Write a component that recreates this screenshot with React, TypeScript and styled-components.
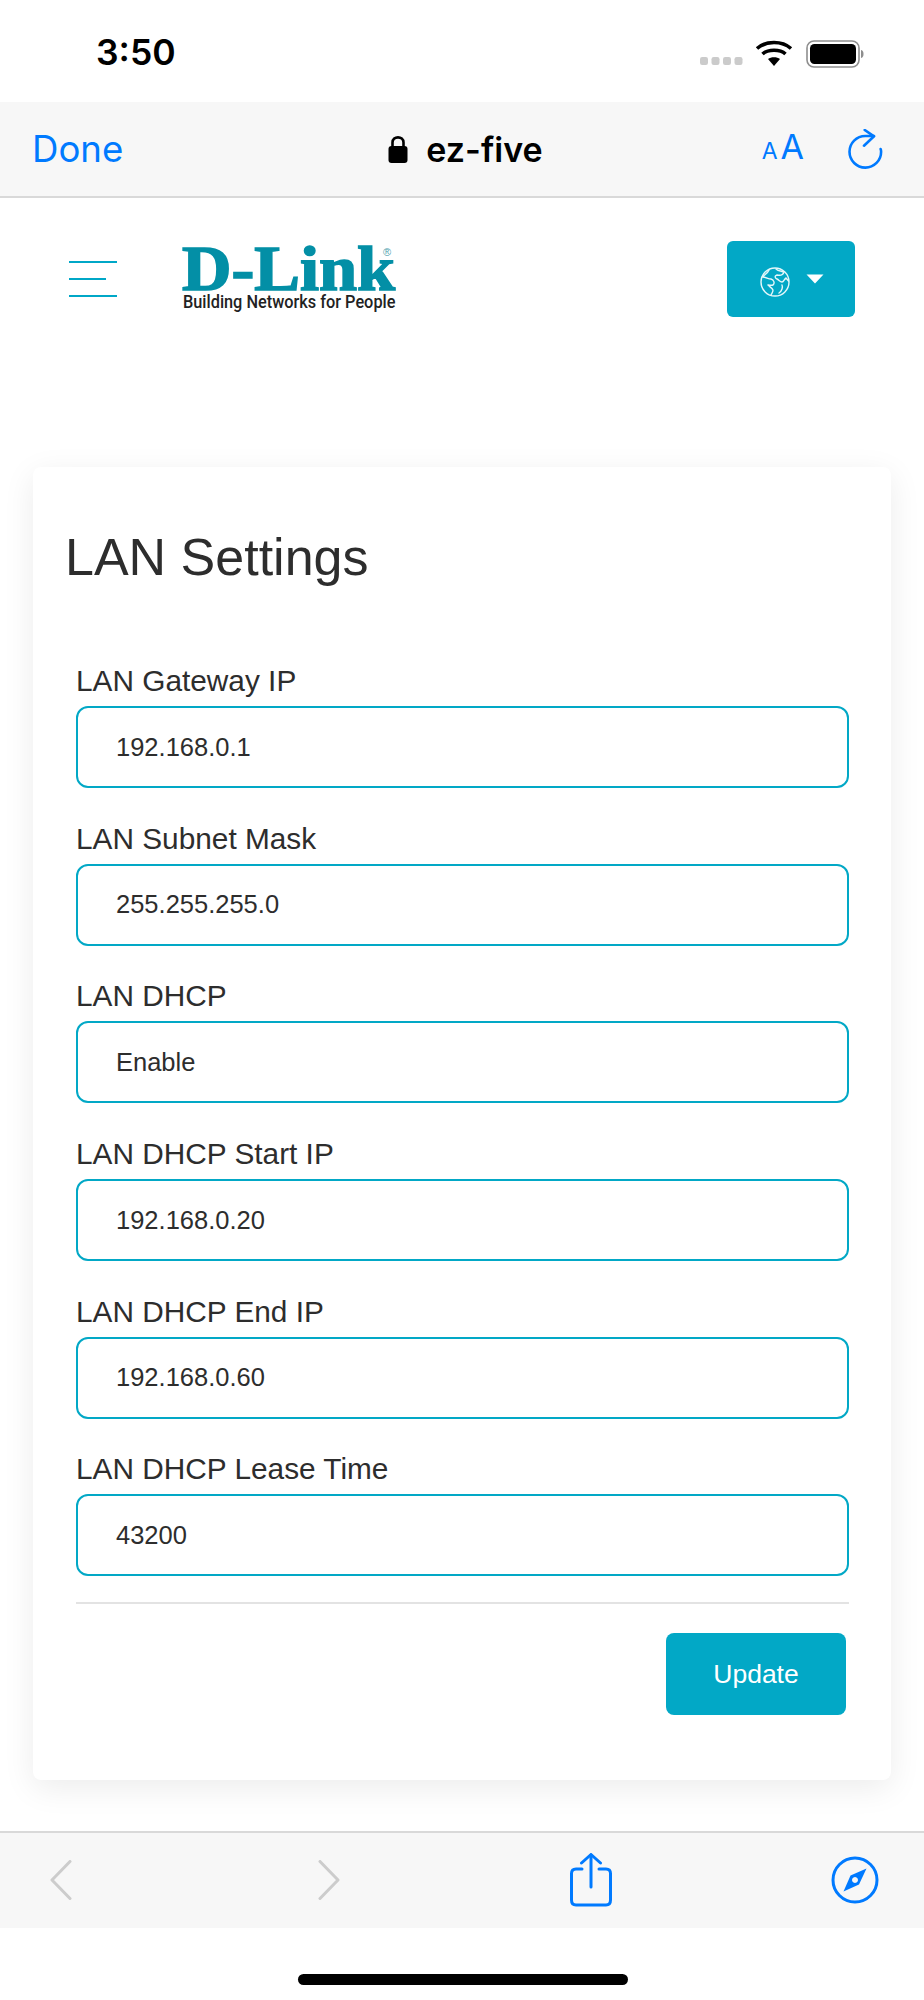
import React from 'react';
import styled, { createGlobalStyle } from 'styled-components';

const Global = createGlobalStyle`
  html, body { margin: 0; padding: 0; background: #fff; }
  * { box-sizing: border-box; }
`;

const Page = styled.div`
  width: 924px;
  height: 2000px;
  display: flex;
  flex-direction: column;
  overflow: hidden;
  background: #fff;
  font-family: "Liberation Sans", Arial, sans-serif;
`;

const StatusBar = styled.div`
  height: 102px;
  flex: none;
  display: flex;
  justify-content: space-between;
  padding: 32px 0 0 96px;
`;

const Clock = styled.span`
  font-family: Inter, sans-serif;
  font-weight: 600;
  font-size: 35.5px;
  line-height: 42px;
  color: #000;
`;

const StatusIcons = styled.div`
  display: flex;
  align-items: flex-start;
  padding: 6px 0 0 0;
  margin-right: 52px;
`;

const SafariTop = styled.div`
  height: 96px;
  flex: none;
  background: #f7f7f7;
  border-bottom: 2px solid #d9d9d9;
  display: grid;
  grid-template-columns: 1fr auto 1fr;
  align-items: center;
  padding: 0 32px;
`;

const DoneLink = styled.span`
  font-family: Inter, sans-serif;
  font-size: 36.6px;
  color: #007aff;
`;

const Address = styled.div`
  display: flex;
  align-items: center;
  gap: 18px;
  margin-left: 7px;
  font-family: Inter, sans-serif;
  font-weight: 600;
  font-size: 34px;
  color: #000;
`;

const TopActions = styled.div`
  display: flex;
  justify-content: flex-end;
  align-items: center;
  gap: 44px;
  margin-right: 8px;
`;

const TextSize = styled.div`
  display: flex;
  align-items: baseline;
  gap: 3px;
  font-family: Inter, sans-serif;
  color: #007aff;
  line-height: 30px;
`;

const TextSizeLetter = styled.span<{ $size: number }>`
  font-size: ${p => p.$size}px;
`;

const SiteHeader = styled.header`
  flex: none;
  height: 269px;
  display: flex;
  align-items: flex-start;
  padding: 43px 69px 0 69px;
`;

const Burger = styled.div`
  width: 48px;
  display: flex;
  flex-direction: column;
  gap: 15px;
  margin-top: 20px;
`;

const BurgerLine = styled.span<{ $w: number }>`
  display: block;
  height: 2px;
  width: ${p => p.$w}px;
  background: #00a7c7;
`;

const LogoSlot = styled.div`
  margin-left: 65px;
  margin-top: -14px;
`;

const LangButton = styled.div`
  margin-left: auto;
  width: 128px;
  height: 76px;
  background: #02a8c6;
  border-radius: 6px;
  display: flex;
  align-items: center;
  justify-content: center;
  gap: 16px;
  padding-left: 2px;
`;

const Card = styled.section`
  flex: none;
  margin: 0 33px;
  height: 1313px;
  background: #fff;
  border-radius: 8px;
  padding: 0 42px 0 32px;
  box-shadow: 0 8px 32px rgba(0, 0, 0, 0.08);
`;

const Title = styled.h1`
  margin: 0 0 68px 0;
  padding-top: 54px;
  font-size: 52px;
  line-height: 72px;
  font-weight: 400;
  color: #2d2d2d;
`;

const Fields = styled.div`
  display: flex;
  flex-direction: column;
  padding-left: 11px;
  gap: 30.7px;
`;

const Field = styled.div`
  display: flex;
  flex-direction: column;
`;

const Label = styled.label`
  font-size: 29.8px;
  line-height: 36px;
  height: 36px;
  margin-top: 2px;
  margin-bottom: 7px;
  color: #2d2d2d;
`;

const Value = styled.div`
  height: 82px;
  border: 2px solid #02a8c6;
  border-radius: 12px;
  padding: 0 38px;
  display: flex;
  align-items: center;
  font-size: 25.5px;
  color: #2d2d2d;
`;

const Divider = styled.hr`
  border: 0;
  height: 2px;
  margin: 26px 0 29px 11px;
  background: #e3e3e3;
`;

const Actions = styled.div`
  display: flex;
  justify-content: flex-end;
  padding-right: 3px;
`;

const UpdateButton = styled.button`
  width: 180px;
  height: 82px;
  border: 0;
  border-radius: 8px;
  background: #02a8c6;
  color: #fff;
  font-family: inherit;
  font-size: 26.5px;
`;

const SafariBottom = styled.div`
  margin-top: 51px;
  flex: none;
  height: 97px;
  background: #f7f7f7;
  border-top: 2px solid #d9d9d9;
  display: grid;
  grid-template-columns: repeat(4, 1fr);
  align-items: center;
  padding: 0 0 2px 0;
`;

const ToolSlot = styled.div<{ $left: number }>`
  padding-left: ${p => p.$left}px;
  display: flex;
`;

const HomeArea = styled.div`
  flex: 1;
  display: flex;
  justify-content: center;
  padding: 46px 0 0 2px;
`;

const HomeBar = styled.div`
  width: 330px;
  height: 11px;
  border-radius: 6px;
  background: #000;
`;

const fields = [
  ['LAN Gateway IP', '192.168.0.1'],
  ['LAN Subnet Mask', '255.255.255.0'],
  ['LAN DHCP', 'Enable'],
  ['LAN DHCP Start IP', '192.168.0.20'],
  ['LAN DHCP End IP', '192.168.0.60'],
  ['LAN DHCP Lease Time', '43200'],
];

const blue = '#007aff';

const SignalWifiBattery = () => (
  <svg width="172" height="30" viewBox="0 0 172 30">
    <g fill="#cbcbcb">
      <rect x="0" y="19" width="8" height="8" rx="2.2" />
      <rect x="11.5" y="19" width="8" height="8" rx="2.2" />
      <rect x="23" y="19" width="8" height="8" rx="2.2" />
      <rect x="34.5" y="19" width="8" height="8" rx="2.2" />
    </g>
    <g fill="none" stroke="#000" strokeWidth="3.6">
      <path d="M57 10.5 C66 2.5 82 2.5 91 10.5" />
      <path d="M62.5 16 C68 11 80 11 85.5 16" />
    </g>
    <path d="M68 21 C71 18.5 77 18.5 80 21 L74 28 Z" fill="#000" />
    <rect x="107" y="3" width="52" height="26" rx="7" fill="none" stroke="#8e8e8e" strokeWidth="1.6" />
    <rect x="110" y="6" width="46" height="20" rx="4.5" fill="#000" />
    <path d="M161 12 C163 12.5 163.5 14 163.5 16 C163.5 18 163 19.5 161 20 Z" fill="#8e8e8e" />
  </svg>
);

const LockIcon = () => (
  <svg width="20" height="28" viewBox="0 0 20 28">
    <path d="M4.5 12 V7.5 C4.5 0.6 15.5 0.6 15.5 7.5 V12" fill="none" stroke="#000" strokeWidth="2.6" />
    <rect x="0.5" y="11" width="19" height="17" rx="3" fill="#000" />
  </svg>
);

const ReloadIcon = () => (
  <svg width="36" height="40" viewBox="0 0 36 40" fill="none" stroke={blue} strokeWidth="2.6" strokeLinecap="round" strokeLinejoin="round">
    <path d="M26 7 H17.3 A15.8 15.8 0 1 0 33.1 22.7 C33.1 21.5 33 21 32.6 20" />
    <path d="M16.7 1 L26 7.3 L16 16.7" />
  </svg>
);

const GlobeSvg = styled.svg`
  margin-top: 6px;
`;

const GlobeIcon = () => (
  <GlobeSvg width="30" height="30" viewBox="0 0 30 30" fill="none" stroke="#e4f7fa" strokeWidth="1.4" strokeLinejoin="round" strokeLinecap="round">
    <circle cx="15" cy="15" r="14" />
    <path d="M9 3 C8 6 4 8 2.5 10 C6 10 8 12 11 12 C14 13 15 16 13 18 C11 19 9 17.5 8 18 C10 20 12 21 13 23 C13 25 12 26 11 28" />
    <path d="M16 2 C18 4 21 4 24 5 C23 8 21 9 17 8 C14 9 15 11 17 12 C19 13 20 15 22 15 C24 15 24 12 26 11 L28.5 14" />
    <path d="M22 18 C23 20 22 24 19 26" />
  </GlobeSvg>
);

const CaretIcon = () => (
  <svg width="18" height="10" viewBox="0 0 18 10">
    <path d="M0.5 0.5 H17.5 L9 9.5 Z" fill="#fff" />
  </svg>
);

const DLinkLogo = () => (
  <svg width="240" height="90" viewBox="0 -19 240 90">
    <text transform="translate(0 44) scale(1.07 1)" fontFamily="'Liberation Serif', serif" fontWeight="700" fontSize="64" fill="#038fa6" stroke="#038fa6" strokeWidth="1.6">D-Link</text>
    <text x="201" y="10" fontFamily="'Liberation Sans', sans-serif" fontSize="11" fill="#4f9fae">®</text>
    <text transform="translate(1 62) scale(0.882 1)" fontFamily="Roboto, sans-serif" fontWeight="500" fontSize="18.5" fill="#222">Building Networks for People</text>
  </svg>
);

const BackIcon = () => (
  <svg width="22" height="40" viewBox="0 0 22 40" fill="none" stroke="#cccccc" strokeWidth="3" strokeLinecap="round" strokeLinejoin="round">
    <path d="M20 1.5 L2 20 L20 38.5" />
  </svg>
);

const ForwardIcon = () => (
  <svg width="22" height="40" viewBox="0 0 22 40" fill="none" stroke="#cccccc" strokeWidth="3" strokeLinecap="round" strokeLinejoin="round">
    <path d="M2 1.5 L20 20 L2 38.5" />
  </svg>
);

const ShareIcon = () => (
  <svg width="42" height="54" viewBox="0 0 42 54" fill="none" stroke={blue} strokeWidth="3" strokeLinecap="round" strokeLinejoin="round">
    <path d="M12 16 H6 C3 16 1.5 17.5 1.5 20.5 V47 C1.5 50.5 3 52 6 52 H36 C39 52 40.5 50.5 40.5 47 V20.5 C40.5 17.5 39 16 36 16 H29" />
    <path d="M21 2 V34" />
    <path d="M11.5 10 L21 1.5 L30.5 10" />
  </svg>
);

const CompassIcon = () => (
  <svg width="48" height="48" viewBox="0 0 48 48">
    <circle cx="24" cy="24" r="22" fill="none" stroke={blue} strokeWidth="3" />
    <path fillRule="evenodd" d="M35.5 12.5 L28 28.5 L12.5 35.5 L19.5 19.5 Z M24 21 a3 3 0 1 0 0.01 0 Z" fill={blue} />
  </svg>
);

export default function App() {
  return (
    <Page>
      <Global />
      <StatusBar>
        <Clock>3:50</Clock>
        <StatusIcons><SignalWifiBattery /></StatusIcons>
      </StatusBar>
      <SafariTop>
        <DoneLink>Done</DoneLink>
        <Address><LockIcon />ez-five</Address>
        <TopActions>
          <TextSize>
            <TextSizeLetter $size={23}>A</TextSizeLetter>
            <TextSizeLetter $size={34}>A</TextSizeLetter>
          </TextSize>
          <ReloadIcon />
        </TopActions>
      </SafariTop>
      <SiteHeader>
        <Burger>
          <BurgerLine $w={48} />
          <BurgerLine $w={37} />
          <BurgerLine $w={48} />
        </Burger>
        <LogoSlot><DLinkLogo /></LogoSlot>
        <LangButton><GlobeIcon /><CaretIcon /></LangButton>
      </SiteHeader>
      <Card>
        <Title>LAN Settings</Title>
        <Fields>
          {fields.map(([label, value]) => (
            <Field key={label}>
              <Label>{label}</Label>
              <Value>{value}</Value>
            </Field>
          ))}
        </Fields>
        <Divider />
        <Actions><UpdateButton>Update</UpdateButton></Actions>
      </Card>
      <SafariBottom>
        <ToolSlot $left={50}><BackIcon /></ToolSlot>
        <ToolSlot $left={87}><ForwardIcon /></ToolSlot>
        <ToolSlot $left={108}><ShareIcon /></ToolSlot>
        <ToolSlot $left={138}><CompassIcon /></ToolSlot>
      </SafariBottom>
      <HomeArea><HomeBar /></HomeArea>
    </Page>
  );
}
